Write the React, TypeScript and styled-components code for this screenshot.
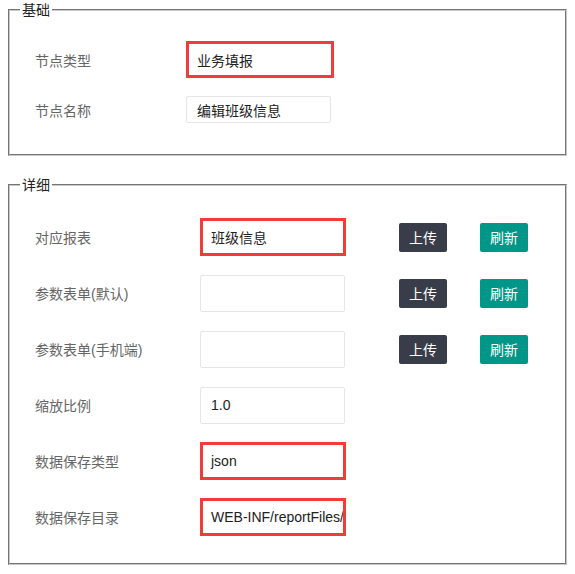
import React from "react";
import styled, { createGlobalStyle } from "styled-components";

const Global = createGlobalStyle`
  html, body { margin: 0; padding: 0; background: #fff; }
  body {
    font-family: "Liberation Sans", "Noto Sans CJK SC", sans-serif;
    font-size: 14px;
    color: #333;
  }
`;

const Page = styled.div`
  padding: 0 8px;
  display: flex;
  flex-direction: column;
  gap: 19px;
`;

const Fieldset = styled.fieldset<{ $pt: number; $pb: number; $gap: number }>`
  margin: 0;
  border: 2px groove #c8c8c8;
  padding: ${(p) => p.$pt}px 0 ${(p) => p.$pb}px 10px;
  display: flex;
  flex-direction: column;
  gap: ${(p) => p.$gap}px;
  min-width: 0;
`;

const Legend = styled.legend`
  margin: 0;
  padding: 0 2px;
  font-size: 14px;
  line-height: 20px;
  color: #222;
`;

const Row = styled.div<{ $labelW: number; $h: number }>`
  display: grid;
  grid-template-columns: ${(p) => p.$labelW}px auto;
  align-items: center;
  height: ${(p) => p.$h}px;
  padding-left: 15px;
`;

const Label = styled.div`
  color: #666;
  font-size: 14px;
  white-space: nowrap;
`;

const Controls = styled.div`
  display: flex;
  align-items: center;
`;

const Input = styled.div<{ $w: number; $h: number; $hl?: boolean }>`
  box-sizing: border-box;
  width: ${(p) => p.$w}px;
  height: ${(p) => p.$h}px;
  border: ${(p) => (p.$hl ? "3px solid #f43b3b" : "1px solid #e6e6e6")};
  border-radius: ${(p) => (p.$hl ? "0" : "2px")};
  padding-left: ${(p) => (p.$hl ? 8 : 10)}px;
  display: flex;
  align-items: center;
  color: #222;
  font-size: 14px;
  white-space: nowrap;
  overflow: hidden;
  background: #fff;
`;

const Btn = styled.div<{ $teal?: boolean; $ml: number }>`
  width: 48px;
  height: 29px;
  margin-left: ${(p) => p.$ml}px;
  border-radius: 2px;
  background: ${(p) => (p.$teal ? "#009688" : "#393d49")};
  color: #fff;
  font-size: 14px;
  display: flex;
  align-items: center;
  justify-content: center;
`;

type F = { label: string; value?: string; hl?: boolean; btns?: boolean };

const detail: F[] = [
  { label: "对应报表", value: "班级信息", hl: true, btns: true },
  { label: "参数表单(默认)", btns: true },
  { label: "参数表单(手机端)", btns: true },
  { label: "缩放比例", value: "1.0" },
  { label: "数据保存类型", value: "json", hl: true },
  { label: "数据保存目录", value: "WEB-INF/reportFiles/", hl: true },
];

export default function App() {
  return (
    <>
      <Global />
      <Page>
        <Fieldset $pt={21} $pb={31} $gap={18}>
          <Legend>基础</Legend>
          <Row $labelW={151} $h={37}>
            <Label>节点类型</Label>
            <Input $w={148} $h={37} $hl>业务填报</Input>
          </Row>
          <Row $labelW={151} $h={27}>
            <Label>节点名称</Label>
            <Input $w={145} $h={27}>编辑班级信息</Input>
          </Row>
        </Fieldset>
        <Fieldset $pt={23} $pb={27} $gap={18}>
          <Legend>详细</Legend>
          {detail.map((f) => (
            <Row key={f.label} $labelW={165} $h={38}>
              <Label>{f.label}</Label>
              <Controls>
                <Input $w={f.hl ? 146 : 145} $h={f.hl ? 38 : 37} $hl={f.hl}>
                  {f.value}
                </Input>
                {f.btns && (
                  <>
                    <Btn $ml={f.hl ? 53 : 54}>上传</Btn>
                    <Btn $ml={33} $teal>
                      刷新
                    </Btn>
                  </>
                )}
              </Controls>
            </Row>
          ))}
        </Fieldset>
      </Page>
    </>
  );
}
